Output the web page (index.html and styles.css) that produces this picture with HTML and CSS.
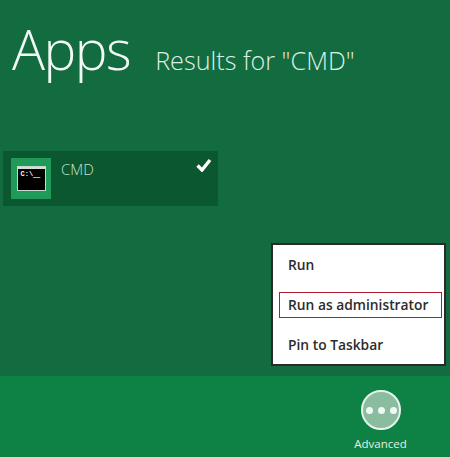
FILE: index.html
```html
<!DOCTYPE html>
<html lang="en">
<head>
<meta charset="utf-8">
<title>Apps</title>
<link rel="stylesheet" href="styles.css">
</head>
<body>
<div class="screen">
  <main class="content">
    <header class="header">
      <h1 class="title">Apps</h1>
      <p class="subtitle">Results for "CMD"</p>
    </header>
    <div class="tile">
      <div class="tile-icon">
        <div class="console">
          <div class="console-bar"></div>
          <div class="console-body">C:\<span class="console-cursor">_</span></div>
        </div>
      </div>
      <span class="tile-name">CMD</span>
      <svg class="tile-check" width="16" height="14" viewBox="0 0 16 14" aria-hidden="true">
        <path d="M1.5 7.5 L6 12 L14 2" fill="none" stroke="#fff" stroke-width="3.4"/>
      </svg>
    </div>
    <div class="menu">
      <div class="menu-item">Run</div>
      <div class="menu-item menu-item-active">Run as administrator</div>
      <div class="menu-item">Pin to Taskbar</div>
    </div>
  </main>
  <footer class="appbar">
    <div class="appbar-button">
      <div class="round">
        <span class="dot"></span><span class="dot"></span><span class="dot"></span>
      </div>
      <span class="appbar-label">Advanced</span>
    </div>
  </footer>
</div>
</body>
</html>
```
FILE: styles.css
```css
html, body {
  margin: 0;
  padding: 0;
}
body {
  width: 450px;
  height: 457px;
  overflow: hidden;
  font-family: "Open Sans", "Liberation Sans", sans-serif;
}
.screen {
  width: 450px;
  height: 457px;
  display: flex;
  flex-direction: column;
  background: #136c3f;
}
.content {
  height: 376px;
  display: flex;
  flex-direction: column;
}
.header {
  display: flex;
  align-items: baseline;
  gap: 25px;
  padding: 11px 0 0 12px;
  height: 133px;
  box-sizing: border-box;
}
.title {
  margin: 0;
  font-size: 55px;
  font-weight: 300;
  letter-spacing: -1.5px;
  line-height: 76px;
  color: #f2f8f4;
}
.subtitle {
  margin: 0;
  font-size: 25.2px;
  font-weight: 300;
  color: #dcefe3;
}
.tile {
  width: 215px;
  height: 55px;
  margin-left: 3px;
  margin-top: 18px;
  background: #0b572f;
  display: flex;
  align-items: flex-start;
  box-sizing: border-box;
  padding: 7px 6px 0 8px;
}
.tile-icon {
  width: 40px;
  height: 41px;
  background: #1f9a58;
  display: flex;
  align-items: center;
  justify-content: center;
}
.console {
  width: 29px;
  height: 25px;
  display: flex;
  flex-direction: column;
  background: #000;
  border: 1px solid #c9d6cd;
  box-sizing: border-box;
}
.console-bar {
  height: 2px;
  background: #d5ddd6;
}
.console-body {
  color: #fff;
  font-family: "Liberation Mono", monospace;
  font-size: 7px;
  line-height: 9px;
  padding: 1px 0 0 3px;
  font-weight: 700;
}
.console-cursor {
  font-size: 12px;
  line-height: 5px;
}
.tile-name {
  margin-left: 10px;
  font-size: 15px;
  font-weight: 300;
  line-height: 22px;
  color: #c6e2d0;
  flex: 1;
}
.tile-check {
  margin-top: 0;
}
.menu {
  align-self: flex-end;
  width: 175px;
  height: 123px;
  margin-top: 37px;
  margin-right: 4px;
  box-sizing: border-box;
  background: #fff;
  border: 2px solid #2a2a2a;
  display: flex;
  flex-direction: column;
  padding: 7px 2px 0 6px;
  gap: 14px;
}
.menu-item {
  height: 26px;
  line-height: 24px;
  box-sizing: border-box;
  padding-left: 8px;
  border: 1px solid transparent;
  font-size: 13.8px;
  font-weight: 600;
  color: #2c2c2c;
  white-space: nowrap;
}
.menu-item-active {
  border-color: #b01c30;
}
.appbar {
  height: 81px;
  background: #0e8245;
  display: flex;
  justify-content: flex-end;
  padding: 14px 39px 0 0;
  box-sizing: border-box;
}
.appbar-button {
  width: 60px;
  display: flex;
  flex-direction: column;
  align-items: center;
}
.round {
  width: 40px;
  height: 40px;
  box-sizing: border-box;
  border: 2px solid #e9f3ed;
  border-radius: 50%;
  background: #8abda0;
  display: flex;
  align-items: center;
  justify-content: center;
  gap: 5px;
}
.dot {
  width: 7px;
  height: 7px;
  border-radius: 50%;
  background: #f2f8f4;
}
.appbar-label {
  margin-top: 6px;
  margin-right: 1px;
  font-size: 11.5px;
  line-height: 16px;
  color: #e3f0e8;
}
```
